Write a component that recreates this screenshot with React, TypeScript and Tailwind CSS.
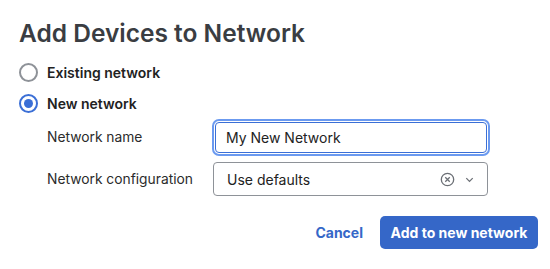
import React, { useState } from "react";

const font = { fontFamily: "Inter, 'Noto Sans', sans-serif" };

function Radio({ checked }: { checked: boolean }) {
  return checked ? (
    <span className="flex h-[19px] w-[19px] items-center justify-center rounded-full border-2 border-[#3b6fd6]">
      <span className="h-[9px] w-[9px] rounded-full bg-[#3b6fd6]" />
    </span>
  ) : (
    <span className="h-[19px] w-[19px] rounded-full border-2 border-[#8e9298]" />
  );
}

export default function App() {
  const [mode, setMode] = useState("new");
  const [name, setName] = useState("My New Network");

  return (
    <div className="h-[269px] w-[550px] bg-white pl-[19px] pr-[12px] pt-[18px] text-[#222]" style={font}>
      <h1 className="text-[24.5px] font-semibold leading-[30px] text-[#3a3d42]">
        Add Devices to Network
      </h1>

      <div className="mt-[15px] flex flex-col gap-[12px]">
        <label className="flex h-[19px] cursor-pointer items-center gap-[9px]" onClick={() => setMode("existing")}>
          <Radio checked={mode === "existing"} />
          <span className="text-[14px] font-semibold text-[#222]">Existing network</span>
        </label>
        <label className="flex h-[19px] cursor-pointer items-center gap-[9px]" onClick={() => setMode("new")}>
          <Radio checked={mode === "new"} />
          <span className="text-[14px] font-semibold text-[#222]">New network</span>
        </label>
      </div>

      <div className="mt-[6px] grid grid-cols-[165px_278px] items-center gap-y-[6px] pl-[28px] text-[13.8px]">
        <span className="text-[#2b2b2b]">Network name</span>
        <div className="rounded-[7px] border-2 border-[#6b9af0] p-[1px]">
          <input
            autoFocus
            value={name}
            onChange={(e) => setName(e.target.value)}
            className="h-[31px] w-full rounded-[4px] border-[1.5px] border-[#3b6fd6] px-[10px] text-[14px] text-[#222] caret-[#222] outline-none"
          />
        </div>
        <span className="text-[#2b2b2b]">Network configuration</span>
        <div className="ml-[1px] mr-[2px] flex h-[34px] items-center rounded-[4px] border-[1.5px] border-[#8e9298] pl-[13px] pr-[12px]">
          <span className="flex-1 text-[14px] text-[#222]">Use defaults</span>
          <svg width="15" height="15" viewBox="0 0 16 16" fill="none" stroke="#6b6f75" strokeWidth="1.4">
            <circle cx="8" cy="8" r="6.6" />
            <path d="M5.6 5.6l4.8 4.8M10.4 5.6l-4.8 4.8" />
          </svg>
          <svg className="ml-[9px]" width="11" height="11" viewBox="0 0 12 12" fill="none" stroke="#6b6f75" strokeWidth="1.4">
            <path d="M2.5 4.5L6 8l3.5-3.5" />
          </svg>
        </div>
      </div>

      <div className="mt-[20px] flex items-center justify-end gap-[17px]">
        <button className="text-[14px] font-bold text-[#3567c8]">Cancel</button>
        <button className="h-[33px] w-[158px] rounded-[5px] bg-[#3567c8] text-[14px] font-bold text-white">
          Add to new network
        </button>
      </div>
    </div>
  );
}
